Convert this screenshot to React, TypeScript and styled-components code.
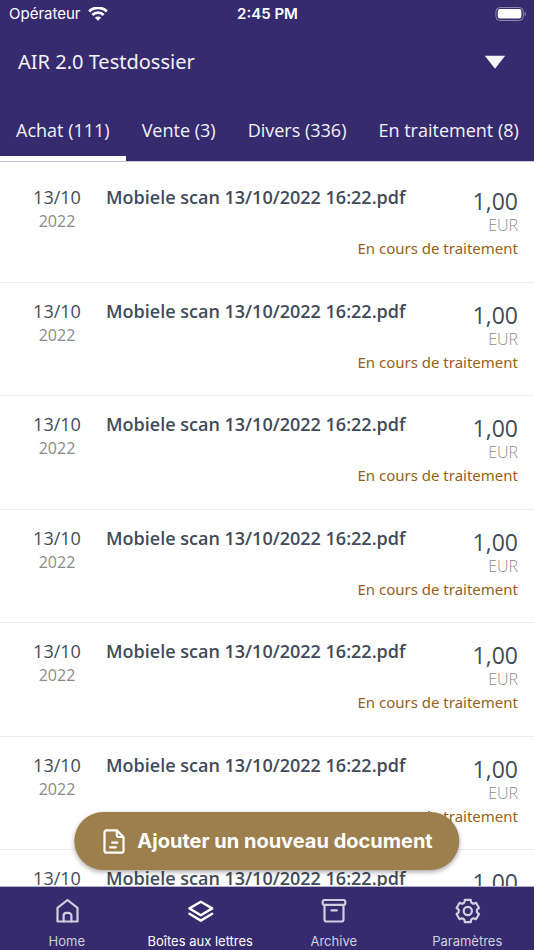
import React from "react";
import styled, { createGlobalStyle } from "styled-components";

const textFont = `"Open Sans", "Noto Sans", sans-serif`;
const wideFont = `"Noto Sans", "Open Sans", sans-serif`;
const systemFont = `Inter, "Liberation Sans", sans-serif`;

const GlobalStyle = createGlobalStyle`
  *, *::before, *::after { box-sizing: border-box; }
  html, body, #root { height: 100%; }
  body {
    margin: 0;
    background: #ffffff;
    font-family: ${textFont};
    -webkit-font-smoothing: antialiased;
  }
`;

const colors = {
  indigo: "#352b6e",
  ink: "#414b59",
  grey: "#8a8a8a",
  lightGrey: "#8c8c8c",
  line: "#ebebeb",
  amber: "#95611a",
  gold: "#9d7f4e",
};

const Screen = styled.div`
  display: flex;
  flex-direction: column;
  height: 100vh;
  overflow: hidden;
`;

const Header = styled.header`
  flex: none;
  background: ${colors.indigo};
  color: #f3f2f6;
  border-bottom: 1px solid #c9c7d3;
`;

const StatusBar = styled.div`
  display: grid;
  grid-template-columns: 1fr auto 1fr;
  align-items: center;
  height: 28px;
  padding: 0 8px 0 9px;
  color: #ffffff;
  font: 400 15px/20px ${systemFont};
`;

const Carrier = styled.div`
  display: flex;
  align-items: center;
  gap: 7px;
`;

const Clock = styled.time`
  font-weight: 600;
`;

const BatterySlot = styled.div`
  display: flex;
  justify-content: flex-end;
`;

const DossierButton = styled.button`
  display: flex;
  align-items: center;
  justify-content: space-between;
  width: 100%;
  height: 68px;
  padding: 0 28px 0 18px;
  border: 0;
  background: none;
  color: inherit;
  font: 400 20px/28px ${wideFont};
  text-align: left;
`;

const TabList = styled.div`
  display: flex;
  justify-content: space-between;
  height: 65px;
`;

const Tab = styled.button<{ $active?: boolean }>`
  padding: 8px 16px 0;
  border: 0;
  border-bottom: 5px solid ${(p) => (p.$active ? "#ffffff" : "transparent")};
  background: none;
  color: inherit;
  font: 400 18px/28px ${textFont};
  white-space: nowrap;
`;

const Documents = styled.ul`
  flex: 1;
  min-height: 0;
  margin: 0;
  padding: 7px 0 0;
  overflow: hidden;
  list-style: none;
`;

const DocumentRow = styled.li`
  display: grid;
  grid-template-columns: 82px 1fr auto;
  column-gap: 24px;
  height: 114px;
  padding: 15px 16px 0 0;
  border-bottom: 1px solid ${colors.line};
  color: ${colors.ink};

  &:nth-child(even) {
    height: 113px;
  }
`;

const DateCell = styled.div`
  padding-left: 32px;
  text-align: center;
`;

const Day = styled.div`
  font-size: 18px;
  line-height: 26px;
`;

const Year = styled.div`
  color: ${colors.grey};
  font-size: 16px;
  line-height: 22px;
`;

const FileName = styled.div`
  font-size: 18px;
  font-weight: 600;
  line-height: 26px;
  white-space: nowrap;
`;

const AmountCell = styled.div`
  width: 0;
  display: flex;
  flex-direction: column;
  align-items: flex-end;
  white-space: nowrap;
`;

const Amount = styled.div`
  padding-top: 2px;
  font-size: 23px;
  line-height: 30px;
`;

const Currency = styled.div`
  color: ${colors.lightGrey};
  font-size: 16px;
  font-weight: 300;
  line-height: 18px;
`;

const Status = styled.div`
  padding-top: 3px;
  color: ${colors.amber};
  font: 400 15px/22px ${wideFont};
`;

const Footer = styled.footer`
  position: relative;
  flex: none;
`;

const AddButton = styled.button`
  position: absolute;
  bottom: calc(100% + 16px);
  left: 50%;
  transform: translateX(-50%);
  display: flex;
  align-items: center;
  gap: 8px;
  height: 58px;
  padding: 0 27px;
  border: 0;
  border-radius: 29px;
  background: ${colors.gold};
  color: #ffffff;
  font: 700 20px/28px ${systemFont};
  white-space: nowrap;
  box-shadow: 0 2px 5px rgba(0, 0, 0, 0.35);
`;

const NavBar = styled.nav`
  display: grid;
  grid-template-columns: repeat(4, 1fr);
  height: 64px;
  border-top: 1px solid #b4b0c6;
  background: ${colors.indigo};
`;

const NavLink = styled.a<{ $active?: boolean }>`
  display: flex;
  flex-direction: column;
  align-items: center;
  gap: 8px;
  padding-top: 10px;
  color: ${(p) => (p.$active ? "#ffffff" : "#d2cfde")};
  font: 400 13px/17px ${systemFont};
  text-decoration: none;
  white-space: nowrap;
`;

const iconProps = {
  width: 28,
  height: 28,
  viewBox: "0 0 28 28",
  fill: "none",
  stroke: "currentColor",
  strokeWidth: 2.2,
  strokeLinecap: "round" as const,
  strokeLinejoin: "round" as const,
  "aria-hidden": true,
};

const WifiIcon = () => (
  <svg width="20" height="15" viewBox="0 0 20 15" aria-hidden="true">
    <g fill="none" stroke="#ffffff" strokeWidth="2.8">
      <path d="M1.2 4.4a12.6 12.6 0 0 1 17.6 0" />
      <path d="M4.4 8a7.9 7.9 0 0 1 11.2 0" />
    </g>
    <path d="M10 13.8 6.9 10.7a4.4 4.4 0 0 1 6.2 0Z" fill="#ffffff" />
  </svg>
);

const BatteryIcon = () => (
  <svg width="31" height="15" viewBox="0 0 31 15" aria-hidden="true">
    <rect x="0.9" y="0.5" width="27.4" height="13" rx="4" fill="none" stroke="#8f89ae" />
    <rect x="2.8" y="2.1" width="23.6" height="9.4" rx="2" fill="#ffffff" />
    <path d="M29.6 4.6v4.6c1.6-.7 1.6-3.9 0-4.6Z" fill="#8f89ae" />
  </svg>
);

const CaretIcon = () => (
  <svg width="22" height="14" viewBox="0 0 22 14" aria-hidden="true">
    <path d="M.8.8h20.4L11 13.8Z" fill="#f6f5f8" />
  </svg>
);

const DocumentIcon = () => (
  <svg {...iconProps}>
    <path d="M5 3.4h10.5l6.7 6.6v13.9a1.8 1.8 0 0 1-1.8 1.8H5a1.8 1.8 0 0 1-1.8-1.8V5.2A1.8 1.8 0 0 1 5 3.4Z" />
    <path d="M15.5 3.8v4.4a1.8 1.8 0 0 0 1.8 1.8h4.4M10.8 15.6h5.3M8.9 20.4h5.6" />
  </svg>
);

const HomeIcon = () => (
  <svg {...iconProps}>
    <path d="M4.5 10.9 14.5 3l10 7.9v13.6h-20Z" />
    <path d="M10.6 24.4v-5.6a3 3 0 0 1 3-3h1.8a3 3 0 0 1 3 3v5.6" />
  </svg>
);

const LayersIcon = () => (
  <svg {...iconProps} width={30} viewBox="-1 0 30 28" strokeWidth={2.4}>
    <path d="m14.8 4.8 11.4 6.6-11.4 6.8-11.4-6.8Z" />
    <path d="m3.4 16.8 11.4 6.8 11.4-6.8" />
  </svg>
);

const ArchiveIcon = () => (
  <svg {...iconProps}>
    <rect x="2.7" y="3" width="22.6" height="4.8" rx="1.8" />
    <path d="M4.5 8.2v14.5a1.8 1.8 0 0 0 1.8 1.8h15.4a1.8 1.8 0 0 0 1.8-1.8V8.2M11.4 13.4h5.4" />
  </svg>
);

// Closed outline of a six-toothed gear centred on (cx, cy).
const gearOutline = (cx: number, cy: number) => {
  const point = (radius: number, degrees: number) => {
    const angle = ((degrees - 90) * Math.PI) / 180;
    return `${(cx + radius * Math.cos(angle)).toFixed(2)} ${(cy + radius * Math.sin(angle)).toFixed(2)}`;
  };
  const teeth = [0, 60, 120, 180, 240, 300].map((a) =>
    [
      point(11.6, a - 15),
      `L${point(11.6, a + 15)}`,
      `L${point(9.8, a + 19)}`,
      `Q${point(8.9, a + 23)} ${point(9.1, a + 30)}`,
      `Q${point(8.9, a + 37)} ${point(9.8, a + 41)}`,
    ].join(""),
  );
  return `M${teeth.join("L")}Z`;
};

const GearIcon = () => (
  <svg {...iconProps}>
    <path d={gearOutline(14.8, 14)} />
    <circle cx="14.8" cy="14" r="4.1" />
  </svg>
);

const tabs = ["Achat (111)", "Vente (3)", "Divers (336)", "En traitement (8)"];

const documents = Array.from({ length: 7 }, (_, id) => ({
  id,
  day: "13/10",
  year: "2022",
  name: "Mobiele scan 13/10/2022 16:22.pdf",
  amount: "1,00",
  currency: "EUR",
  status: "En cours de traitement",
}));

const navItems = [
  { label: "Home", Icon: HomeIcon },
  { label: "Boîtes aux lettres", Icon: LayersIcon, active: true },
  { label: "Archive", Icon: ArchiveIcon },
  { label: "Paramètres", Icon: GearIcon },
];

export default function App() {
  return (
    <>
      <GlobalStyle />
      <Screen>
        <Header>
          <StatusBar>
            <Carrier>
              Opérateur
              <WifiIcon />
            </Carrier>
            <Clock>2:45 PM</Clock>
            <BatterySlot>
              <BatteryIcon />
            </BatterySlot>
          </StatusBar>
          <DossierButton type="button" aria-haspopup="listbox">
            AIR 2.0 Testdossier
            <CaretIcon />
          </DossierButton>
          <TabList role="tablist">
            {tabs.map((label, i) => (
              <Tab key={label} type="button" role="tab" aria-selected={i === 0} $active={i === 0}>
                {label}
              </Tab>
            ))}
          </TabList>
        </Header>

        <Documents>
          {documents.map((doc) => (
            <DocumentRow key={doc.id}>
              <DateCell>
                <Day>{doc.day}</Day>
                <Year>{doc.year}</Year>
              </DateCell>
              <FileName>{doc.name}</FileName>
              <AmountCell>
                <Amount>{doc.amount}</Amount>
                <Currency>{doc.currency}</Currency>
                <Status>{doc.status}</Status>
              </AmountCell>
            </DocumentRow>
          ))}
        </Documents>

        <Footer>
          <AddButton type="button">
            <DocumentIcon />
            Ajouter un nouveau document
          </AddButton>
          <NavBar>
            {navItems.map(({ label, Icon, active }) => (
              <NavLink key={label} href="#" $active={active} aria-current={active ? "page" : undefined}>
                <Icon />
                {label}
              </NavLink>
            ))}
          </NavBar>
        </Footer>
      </Screen>
    </>
  );
}
